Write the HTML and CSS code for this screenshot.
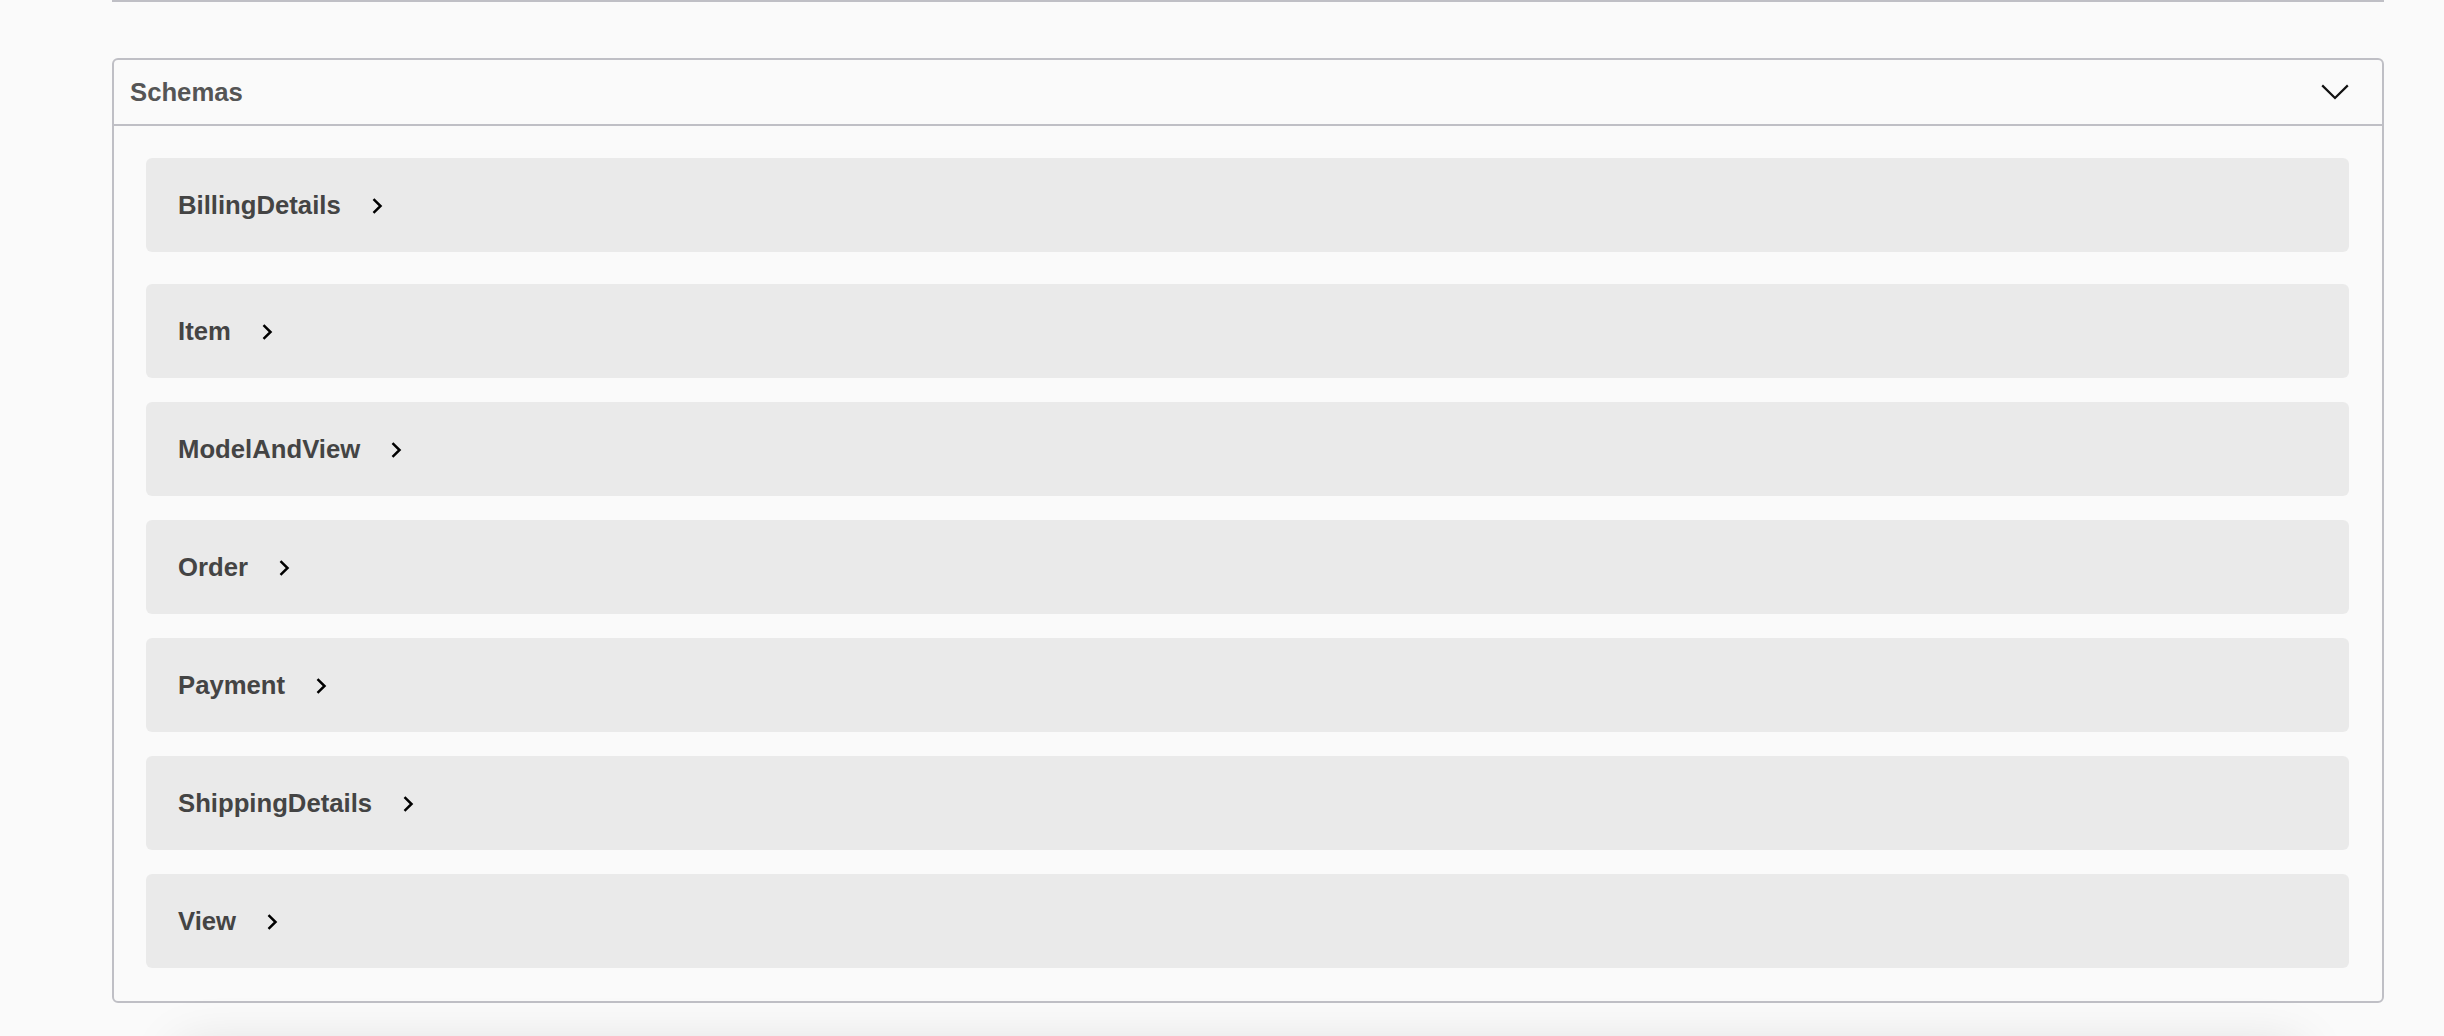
FILE: index.html
```html
<!DOCTYPE html>
<html lang="en">
<head>
<meta charset="utf-8">
<title>Schemas</title>
<link rel="stylesheet" href="styles.css">
</head>
<body>
<div class="wrapper">
  <div class="divider"></div>
  <section class="models">
    <h4 class="models-header">
      <span class="models-title">Schemas</span>
      <svg class="arrow-down" width="28" height="16" viewBox="0 0 28 16" aria-hidden="true">
        <polyline points="1.2,1.4 14,14 26.8,1.4" fill="none" stroke="#111" stroke-width="2.2" stroke-linejoin="miter"/>
      </svg>
    </h4>
    <div class="models-body">
      <div class="model-container"><span class="model-title">BillingDetails</span><svg class="arrow-right" width="11" height="16" viewBox="0 0 11 16" aria-hidden="true"><polyline points="1.5,1.2 8.5,8 1.5,14.8" fill="none" stroke="#000" stroke-width="2.5"/></svg></div>
      <div class="model-container"><span class="model-title">Item</span><svg class="arrow-right" width="11" height="16" viewBox="0 0 11 16" aria-hidden="true"><polyline points="1.5,1.2 8.5,8 1.5,14.8" fill="none" stroke="#000" stroke-width="2.5"/></svg></div>
      <div class="model-container"><span class="model-title">ModelAndView</span><svg class="arrow-right" width="11" height="16" viewBox="0 0 11 16" aria-hidden="true"><polyline points="1.5,1.2 8.5,8 1.5,14.8" fill="none" stroke="#000" stroke-width="2.5"/></svg></div>
      <div class="model-container"><span class="model-title">Order</span><svg class="arrow-right" width="11" height="16" viewBox="0 0 11 16" aria-hidden="true"><polyline points="1.5,1.2 8.5,8 1.5,14.8" fill="none" stroke="#000" stroke-width="2.5"/></svg></div>
      <div class="model-container"><span class="model-title">Payment</span><svg class="arrow-right" width="11" height="16" viewBox="0 0 11 16" aria-hidden="true"><polyline points="1.5,1.2 8.5,8 1.5,14.8" fill="none" stroke="#000" stroke-width="2.5"/></svg></div>
      <div class="model-container"><span class="model-title">ShippingDetails</span><svg class="arrow-right" width="11" height="16" viewBox="0 0 11 16" aria-hidden="true"><polyline points="1.5,1.2 8.5,8 1.5,14.8" fill="none" stroke="#000" stroke-width="2.5"/></svg></div>
      <div class="model-container"><span class="model-title">View</span><svg class="arrow-right" width="11" height="16" viewBox="0 0 11 16" aria-hidden="true"><polyline points="1.5,1.2 8.5,8 1.5,14.8" fill="none" stroke="#000" stroke-width="2.5"/></svg></div>
    </div>
  </section>
  <div class="below-card"></div>
</div>
</body>
</html>
```

FILE: styles.css
```css
html, body {
  margin: 0;
  padding: 0;
  background: #fafafa;
  overflow: hidden;
  height: 100%;
}

body {
  font-family: "Liberation Sans", Arial, Helvetica, sans-serif;
}

.wrapper {
  margin-left: 112px;
  width: 2272px;
}

.divider {
  height: 2px;
  background: #bfbfc5;
}

.models {
  margin-top: 56px;
  border: 2px solid #bfbfc5;
  border-radius: 6px;
  background: #fafafa;
}

.models-header {
  margin: 0;
  height: 64px;
  display: flex;
  align-items: center;
  justify-content: space-between;
  padding: 0 33px 0 16px;
  border-bottom: 2px solid #bfbfc5;
}

.models-title {
  font-size: 25.7px;
  font-weight: 700;
  color: #555555;
}

.arrow-down {
  display: block;
}

.models-body {
  display: flex;
  flex-direction: column;
  gap: 24px;
  padding: 32px 33px 33px 32px;
}

.model-container {
  height: 94px;
  display: flex;
  align-items: center;
  gap: 31px;
  padding-left: 32px;
  background: #eaeaea;
  border-radius: 6px;
}

.model-container:first-child {
  margin-bottom: 8px;
}

.model-title {
  font-size: 25.7px;
  font-weight: 700;
  color: #444444;
}

.arrow-right {
  display: block;
  margin-top: 1px;
}

.below-card {
  margin: 44px 84px 0 68px;
  height: 200px;
  background: #fafafa;
  box-shadow: 0 0 50px rgba(0, 0, 0, 0.13);
}
```
